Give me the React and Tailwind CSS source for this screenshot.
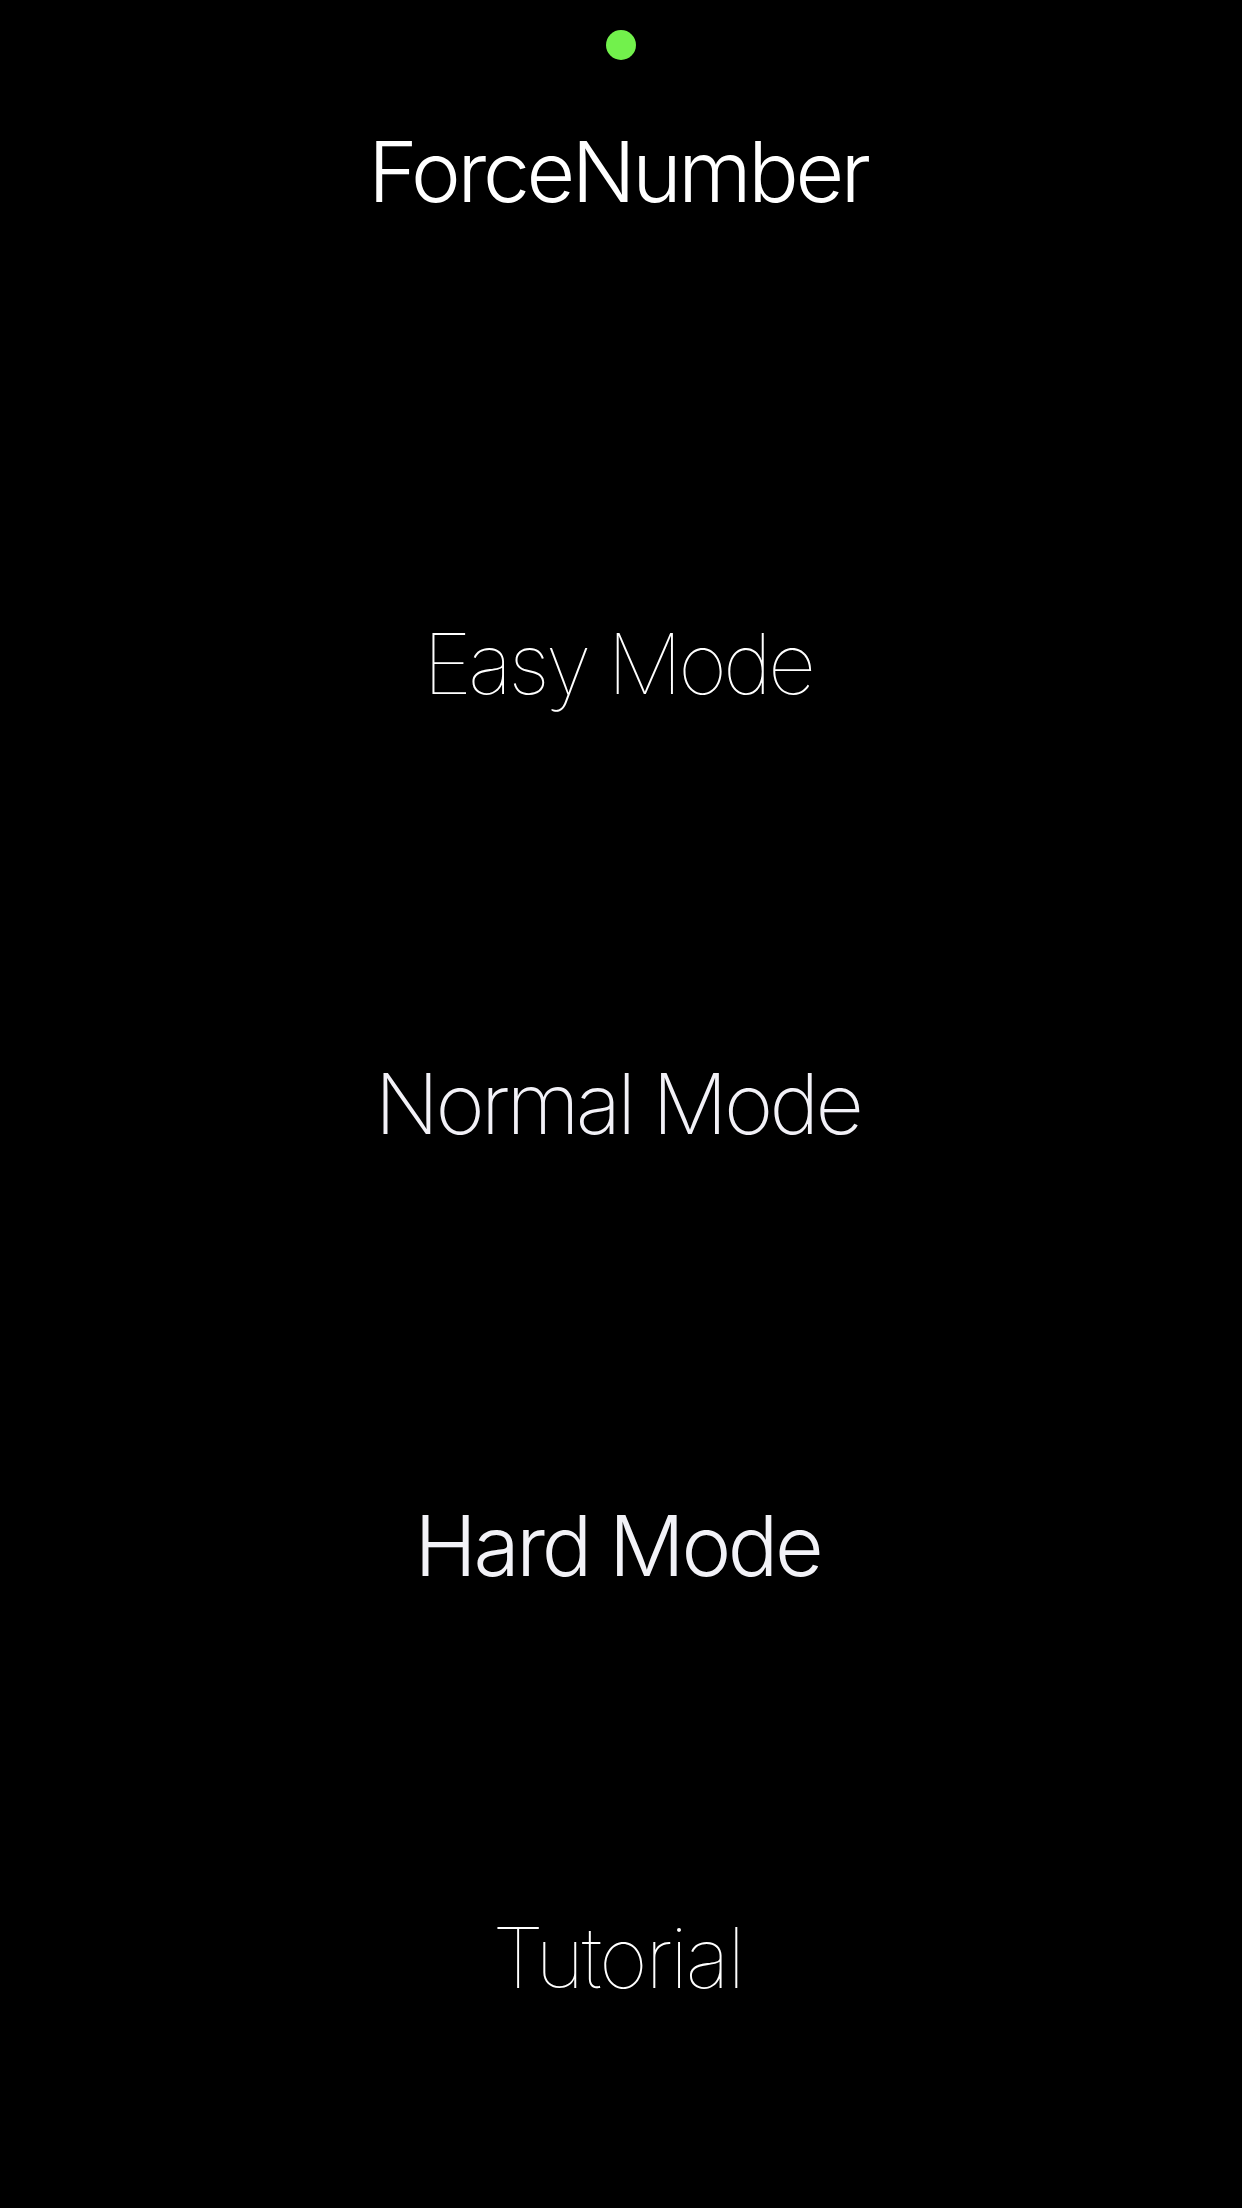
import React from "react";

const modes = [
  { label: "Easy Mode", className: "mt-[408px] font-thin text-white tracking-[-0.047em]" },
  { label: "Normal Mode", className: "mt-[356px] font-extralight text-[#f2f1f7] tracking-[-0.044em]" },
  { label: "Hard Mode", className: "mt-[358px] font-light text-[#f2f2f7] tracking-[-0.04em]" },
  { label: "Tutorial", className: "mt-[328px] font-thin text-white tracking-[-0.03em]" },
];

const App = () => {
  return (
    <div
      className="min-h-screen w-full bg-black flex flex-col items-center"
      style={{ fontFamily: "Inter, 'Helvetica Neue', 'Liberation Sans', sans-serif" }}
    >
      {/* status indicator */}
      <div className="mt-[30px] h-[30px] w-[30px] rounded-full bg-[#72f14c]" />

      <h1 className="mt-[70px] pr-[6px] text-[84px] leading-none font-light text-white tracking-[-0.04em]">
        ForceNumber
      </h1>

      {modes.map((mode) => (
        <button
          key={mode.label}
          className={`pr-[7px] text-[84px] leading-none ${mode.className}`}
        >
          {mode.label}
        </button>
      ))}

      <div className="h-[219px]" />
    </div>
  );
};

export default App;
